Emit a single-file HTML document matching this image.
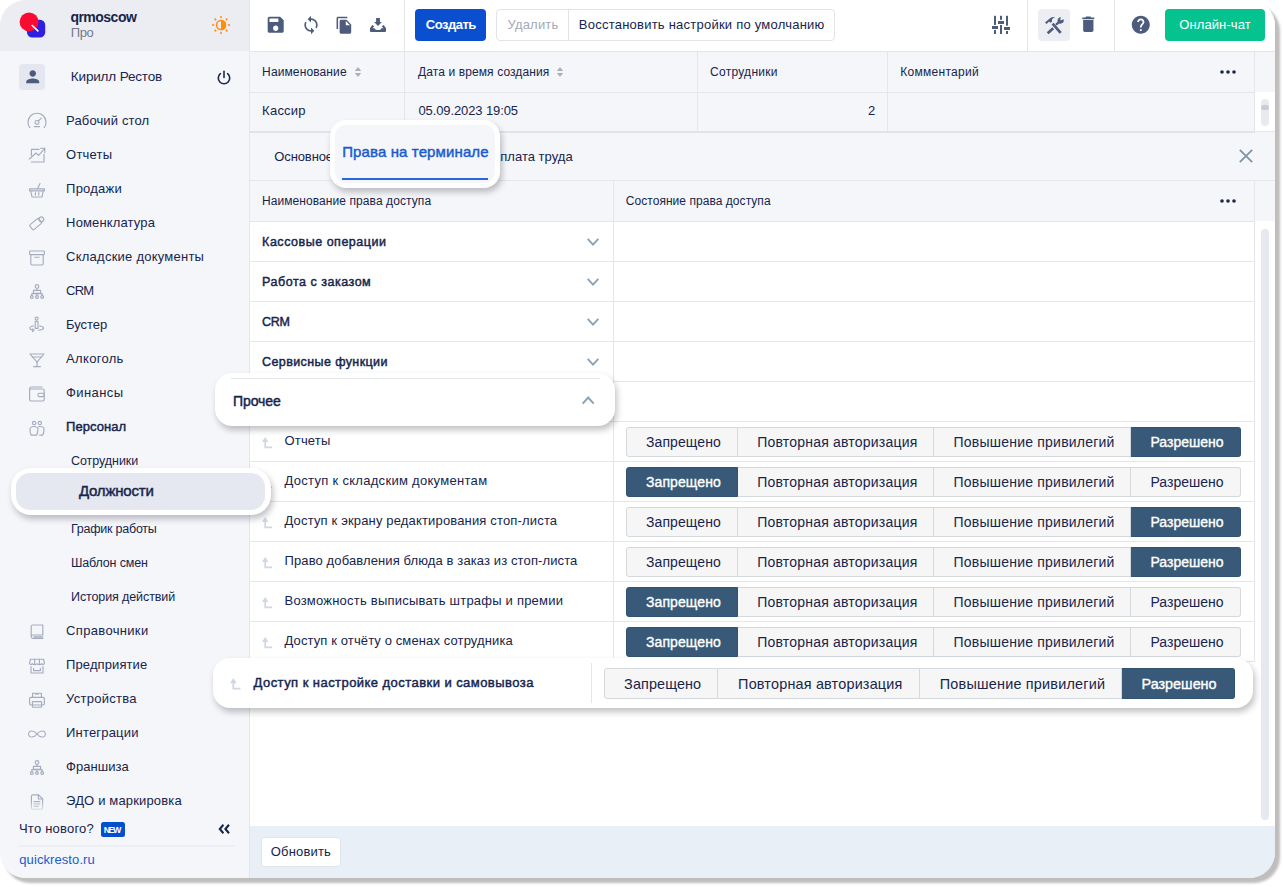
<!DOCTYPE html>
<html lang="ru">
<head>
<meta charset="utf-8">
<title>Должности — Quick Resto</title>
<style>
html,body{margin:0;padding:0;background:#fff;}
body{width:1284px;height:887px;position:relative;overflow:hidden;font-family:"Liberation Sans",Arial,sans-serif;color:#16254c;}
#app{position:absolute;left:0;top:0;width:1275px;height:878px;border-radius:26px 26px 26px 26px;box-shadow:4.2px 5px 2.5px rgba(25,20,15,.275);background:#fff;}
#clip{position:absolute;left:0;top:0;width:1275px;height:878px;border-radius:26px;overflow:hidden;}
.a{position:absolute;}
.t{position:absolute;white-space:nowrap;line-height:20px;height:20px;z-index:10;}
.t.top{z-index:40;}
.t.on{-webkit-text-stroke:0.35px #fff;}
.pop{position:absolute;background:#fff;z-index:30;box-shadow:2px 4px 6px rgba(20,20,30,.26);}
.hl{position:absolute;background:#f0f1f3;}
.vl{position:absolute;width:1px;background:#e4e6ea;}
svg{position:absolute;overflow:visible;}
.seg{position:absolute;height:30px;box-sizing:border-box;border:1px solid #d4d9de;background:#f6f6f6;border-left:none;}
.seg.f{border-left:1px solid #d4d9de;border-radius:3px 0 0 3px;}
.seg.l{border-radius:0 3px 3px 0;}
.seg.on{background:#385a78;border-color:#2f5370;}
</style>
</head>
<body>
<div id="app"></div>
<div id="clip">
<!-- sidebar -->
<div class="a" style="left:0;top:0;width:250px;height:878px;background:#f5f6fa"></div>
<div class="a" style="left:0;top:0;width:250px;height:51px;background:#ecedf2"></div>
<div class="a" style="left:249px;top:0;width:1px;height:878px;background:#e4e6ea"></div>
<div class="a" style="left:19px;top:64px;width:26px;height:26px;border-radius:4px;background:#e4e7ef"></div>
<div class="a" style="left:19px;top:845px;width:216px;height:2px;background:#eceef3"></div>
<div class="a" style="left:101px;top:822px;width:24px;height:15px;border-radius:2.5px;background:#0450cc"></div>
<!-- main -->
<div class="a" style="left:250px;top:0;width:1025px;height:51px;background:#fff"></div>
<div class="a" style="left:250px;top:51px;width:1025px;height:1px;background:#e3e5e9"></div>
<div class="vl" style="left:404px;top:0;height:51px"></div>
<div class="vl" style="left:1027px;top:0;height:51px"></div>
<div class="vl" style="left:1114px;top:0;height:51px"></div>
<div class="a" style="left:415px;top:9px;width:71px;height:32px;border-radius:4px;background:#0a4fd0"></div>
<div class="a" style="left:496px;top:9px;width:338.5px;height:32px;border-radius:4px;border:1px solid #e1e4e8;box-sizing:border-box;background:#fff"></div>
<div class="vl" style="left:568px;top:9px;height:32px;background:#e1e4e8"></div>
<div class="a" style="left:1038px;top:9px;width:32px;height:32px;border-radius:4px;background:#eceef4"></div>
<div class="a" style="left:1165px;top:9px;width:100px;height:32px;border-radius:4px;background:#05c38f"></div>
<!-- table1 -->
<div class="a" style="left:250px;top:52px;width:1025px;height:129px;background:#f5f6fa"></div>
<div class="a" style="left:250px;top:92px;width:1005px;height:1px;background:#e4e6ea"></div>
<div class="a" style="left:250px;top:131px;width:1025px;height:1px;background:#e4e6ea"></div><div class="a" style="left:250px;top:131px;width:1005px;height:2px;background:#e1e3e7"></div>
<div class="vl" style="left:404px;top:52px;height:79px"></div>
<div class="vl" style="left:697px;top:52px;height:79px"></div>
<div class="vl" style="left:887px;top:52px;height:79px"></div>
<div class="vl" style="left:1254px;top:52px;height:79px"></div>
<div class="a" style="left:1255px;top:92px;width:20px;height:39px;background:#fff"></div>
<div class="a" style="left:1261px;top:99px;width:8px;height:27px;border-radius:4px;background:#e8eaef"></div>
<div class="a" style="left:1261px;top:105px;width:8px;height:5px;border-radius:2.5px;background:#c9cdd5"></div>
<!-- tabs bar bottom line -->
<div class="a" style="left:250px;top:180px;width:1025px;height:1px;background:#e4e6ea"></div>
<!-- table2 header -->
<div class="a" style="left:250px;top:222px;width:1025px;height:604px;background:#fff"></div>
<div class="a" style="left:250px;top:181px;width:1025px;height:40px;background:#f5f6fa"></div>
<div class="a" style="left:250px;top:221px;width:1005px;height:1px;background:#e4e6ea"></div>
<div class="vl" style="left:613px;top:181px;height:480px"></div>
<div class="vl" style="left:1254px;top:181px;height:480px"></div>
<div class="a" style="left:250px;top:261px;width:1005px;height:1px;background:#e4e6ea"></div>
<div class="a" style="left:250px;top:301px;width:1005px;height:1px;background:#e4e6ea"></div>
<div class="a" style="left:250px;top:341px;width:1005px;height:1px;background:#e4e6ea"></div>
<div class="a" style="left:250px;top:381px;width:1005px;height:1px;background:#e4e6ea"></div>
<div class="a" style="left:250px;top:421px;width:1005px;height:1px;background:#e4e6ea"></div>
<div class="a" style="left:250px;top:461px;width:1005px;height:1px;background:#e4e6ea"></div>
<div class="a" style="left:250px;top:501px;width:1005px;height:1px;background:#e4e6ea"></div>
<div class="a" style="left:250px;top:541px;width:1005px;height:1px;background:#e4e6ea"></div>
<div class="a" style="left:250px;top:581px;width:1005px;height:1px;background:#e4e6ea"></div>
<div class="a" style="left:250px;top:621px;width:1005px;height:1px;background:#e4e6ea"></div>
<div class="a" style="left:250px;top:661px;width:1005px;height:1px;background:#e4e6ea"></div>
<svg style="left:587px;top:238px" width="12" height="8" viewBox="0 0 12 8"><path d="M0.700 0.800 L6 6.600 L11.300 0.800" fill="none" stroke="#8da2b5" stroke-width="1.900"/></svg>
<svg style="left:587px;top:278px" width="12" height="8" viewBox="0 0 12 8"><path d="M0.700 0.800 L6 6.600 L11.300 0.800" fill="none" stroke="#8da2b5" stroke-width="1.900"/></svg>
<svg style="left:587px;top:318px" width="12" height="8" viewBox="0 0 12 8"><path d="M0.700 0.800 L6 6.600 L11.300 0.800" fill="none" stroke="#8da2b5" stroke-width="1.900"/></svg>
<svg style="left:587px;top:358px" width="12" height="8" viewBox="0 0 12 8"><path d="M0.700 0.800 L6 6.600 L11.300 0.800" fill="none" stroke="#8da2b5" stroke-width="1.900"/></svg>
<div class="seg f" style="left:626px;top:427px;width:112px;height:30px;"></div>
<div class="seg" style="left:738px;top:427px;width:196px;height:30px;"></div>
<div class="seg" style="left:934px;top:427px;width:197px;height:30px;"></div>
<div class="seg l on" style="left:1131px;top:427px;width:110px;height:30px;"></div>
<svg style="left:262px;top:436.8px" width="10" height="11.200" viewBox="0 0 10 11.200"><path d="M0 5 L3.200 0 L6.400 5 Z" fill="#cfd7e3" stroke="none"/><path d="M3.200 4 V10.300 H10" fill="none" stroke="#cfd7e3" stroke-width="1.700"/></svg>
<div class="seg f on" style="left:626px;top:467px;width:112px;height:30px;"></div>
<div class="seg" style="left:738px;top:467px;width:196px;height:30px;"></div>
<div class="seg" style="left:934px;top:467px;width:197px;height:30px;"></div>
<div class="seg l" style="left:1131px;top:467px;width:110px;height:30px;"></div>
<svg style="left:262px;top:476.8px" width="10" height="11.200" viewBox="0 0 10 11.200"><path d="M0 5 L3.200 0 L6.400 5 Z" fill="#cfd7e3" stroke="none"/><path d="M3.200 4 V10.300 H10" fill="none" stroke="#cfd7e3" stroke-width="1.700"/></svg>
<div class="seg f" style="left:626px;top:507px;width:112px;height:30px;"></div>
<div class="seg" style="left:738px;top:507px;width:196px;height:30px;"></div>
<div class="seg" style="left:934px;top:507px;width:197px;height:30px;"></div>
<div class="seg l on" style="left:1131px;top:507px;width:110px;height:30px;"></div>
<svg style="left:262px;top:516.8px" width="10" height="11.200" viewBox="0 0 10 11.200"><path d="M0 5 L3.200 0 L6.400 5 Z" fill="#cfd7e3" stroke="none"/><path d="M3.200 4 V10.300 H10" fill="none" stroke="#cfd7e3" stroke-width="1.700"/></svg>
<div class="seg f" style="left:626px;top:547px;width:112px;height:30px;"></div>
<div class="seg" style="left:738px;top:547px;width:196px;height:30px;"></div>
<div class="seg" style="left:934px;top:547px;width:197px;height:30px;"></div>
<div class="seg l on" style="left:1131px;top:547px;width:110px;height:30px;"></div>
<svg style="left:262px;top:556.8px" width="10" height="11.200" viewBox="0 0 10 11.200"><path d="M0 5 L3.200 0 L6.400 5 Z" fill="#cfd7e3" stroke="none"/><path d="M3.200 4 V10.300 H10" fill="none" stroke="#cfd7e3" stroke-width="1.700"/></svg>
<div class="seg f on" style="left:626px;top:587px;width:112px;height:30px;"></div>
<div class="seg" style="left:738px;top:587px;width:196px;height:30px;"></div>
<div class="seg" style="left:934px;top:587px;width:197px;height:30px;"></div>
<div class="seg l" style="left:1131px;top:587px;width:110px;height:30px;"></div>
<svg style="left:262px;top:596.8px" width="10" height="11.200" viewBox="0 0 10 11.200"><path d="M0 5 L3.200 0 L6.400 5 Z" fill="#cfd7e3" stroke="none"/><path d="M3.200 4 V10.300 H10" fill="none" stroke="#cfd7e3" stroke-width="1.700"/></svg>
<div class="seg f on" style="left:626px;top:627px;width:112px;height:30px;"></div>
<div class="seg" style="left:738px;top:627px;width:196px;height:30px;"></div>
<div class="seg" style="left:934px;top:627px;width:197px;height:30px;"></div>
<div class="seg l" style="left:1131px;top:627px;width:110px;height:30px;"></div>
<svg style="left:262px;top:636.8px" width="10" height="11.200" viewBox="0 0 10 11.200"><path d="M0 5 L3.200 0 L6.400 5 Z" fill="#cfd7e3" stroke="none"/><path d="M3.200 4 V10.300 H10" fill="none" stroke="#cfd7e3" stroke-width="1.700"/></svg>
<div class="a" style="left:1261px;top:229px;width:8px;height:591px;border-radius:4px;background:#e6e9ef"></div>
<!-- footer -->
<div class="a" style="left:250px;top:826px;width:1025px;height:52px;background:#e8eff6"></div>
<div class="a" style="left:260.500px;top:837px;width:80px;height:30px;border-radius:3px;background:#fff;border:1px solid #e0e4ea;box-sizing:border-box"></div>
<svg style="left:17px;top:8px" width="32" height="34" viewBox="17 8 32 34"><rect x="27" y="19.8" width="18.2" height="17.6" rx="5.2" fill="#2f1fe0"/><circle cx="29.1" cy="21.9" r="9.5" fill="#fb0a33"/><path d="M31.7 25 L38.4 31.4" stroke="#fff" stroke-width="1.6" stroke-linecap="butt"/></svg>
<svg style="left:211px;top:15px" width="20" height="20" viewBox="-10 -10 20 20"><g fill="#ff8c0a"><rect x="-0.75" y="-9" width="1.5" height="2.2" transform="rotate(0)"/><rect x="-0.75" y="-9" width="1.5" height="2.2" transform="rotate(45)"/><rect x="-0.75" y="-9" width="1.5" height="2.2" transform="rotate(90)"/><rect x="-0.75" y="-9" width="1.5" height="2.2" transform="rotate(135)"/><rect x="-0.75" y="-9" width="1.5" height="2.2" transform="rotate(180)"/><rect x="-0.75" y="-9" width="1.5" height="2.2" transform="rotate(225)"/><rect x="-0.75" y="-9" width="1.5" height="2.2" transform="rotate(270)"/><rect x="-0.75" y="-9" width="1.5" height="2.2" transform="rotate(315)"/><path d="M0 -5.2 A5.2 5.2 0 0 1 0 5.2 Z"/></g><circle r="4.5" fill="none" stroke="#ff8c0a" stroke-width="1.4"/></svg>
<svg style="left:22.6px;top:67.0px;" width="19.5" height="19.5" viewBox="0 0 24 24"><path fill="#4d5b7c" d="M12 12c2.21 0 4-1.79 4-4s-1.79-4-4-4-4 1.79-4 4 1.79 4 4 4zm0 2c-2.67 0-8 1.34-8 4v2h16v-2c0-2.66-5.33-4-8-4z"/></svg>
<svg style="left:213.5px;top:67.5px" width="20" height="20" viewBox="-10 -10 20 20"><g fill="none" stroke="#1c2a4a" stroke-width="1.6" stroke-linecap="round"><path d="M-3.6 -4.3 A5.7 5.7 0 1 0 3.6 -4.3"/><path d="M0 -6.6 V-0.6"/></g></svg>
<svg style="left:27px;top:113px" width="20" height="20" viewBox="-10 -10 20 20"><g fill="none" stroke="#a5acbe" stroke-width="1.15" stroke-linecap="round" stroke-linejoin="round"><path d="M-7.2 4.6 A9 9 0 1 1 7.2 4.6" /><circle cx="0" cy="-0.6" r="1.9"/><path d="M1.4 -2 L4.2 -4.8"/><path d="M-2.6 3.6 H2.6"/></g></svg>
<svg style="left:27px;top:145px" width="20" height="20" viewBox="-10 -10 20 20"><g fill="none" stroke="#a5acbe" stroke-width="1.15" stroke-linecap="round" stroke-linejoin="round"><path d="M-5.6 -5.6 H2 M-5.6 -5.6 V0.5 M7 -1 V7 H-5.6"/><path d="M-7.6 4 L-1 -2 L1.6 0.4 L7.6 -6.4 M3.6 -6.8 H7.8 V-2.6"/></g></svg>
<svg style="left:27px;top:179.5px" width="20" height="20" viewBox="-10 -10 20 20"><g fill="none" stroke="#a5acbe" stroke-width="1.15" stroke-linecap="round" stroke-linejoin="round"><path d="M-7.4 -1.2 H7.4 V0.8 H-7.4 Z"/><path d="M-6.2 1 L-5 7 H5 L6.2 1"/><path d="M-1.6 2.6 V5 M1.8 2.6 V5"/><path d="M0.6 -1.4 L3 -6.6"/></g></svg>
<svg style="left:27px;top:213px" width="20" height="20" viewBox="-10 -10 20 20"><g fill="none" stroke="#a5acbe" stroke-width="1.15" stroke-linecap="round" stroke-linejoin="round"><g transform="rotate(-40)"><rect x="-7.5" y="-3.1" width="11.5" height="6.2" rx="1.2"/><circle cx="5.6" cy="0" r="2.4"/></g></g></svg>
<svg style="left:27px;top:247.5px" width="20" height="20" viewBox="-10 -10 20 20"><g fill="none" stroke="#a5acbe" stroke-width="1.15" stroke-linecap="round" stroke-linejoin="round"><rect x="-7.4" y="-7" width="14.8" height="3.6" rx="0.8"/><path d="M-6.2 -3.2 V5.8 Q-6.2 7 -5 7 H5 Q6.2 7 6.2 5.8 V-3.2"/><path d="M-2.2 -0.8 H2.2"/></g></svg>
<svg style="left:27px;top:281.5px" width="20" height="20" viewBox="-10 -10 20 20"><g fill="none" stroke="#a5acbe" stroke-width="1.15" stroke-linecap="round" stroke-linejoin="round"><circle cx="0" cy="-5.6" r="1.8"/><path d="M0 -3.8 V-1.6 M-3.6 -1.6 H3.6 V1.4 H-3.6 Z" /><path d="M-5.2 3.6 V1.6 M0 3.6 V1.4 M5.2 3.6 V1.6 M-5.2 1.6 H5.2" /><circle cx="-5.2" cy="5" r="1.4"/><circle cx="0" cy="5" r="1.4"/><circle cx="5.2" cy="5" r="1.4"/></g></svg>
<svg style="left:27px;top:315px" width="20" height="20" viewBox="-10 -10 20 20"><g fill="none" stroke="#a5acbe" stroke-width="1.15" stroke-linecap="round" stroke-linejoin="round"><circle cx="-0.4" cy="-6.4" r="1.5"/><path d="M-1.8 -3.6 H1 V3.4 H-1.8 Z"/><path d="M2.6 1 C8 1.4 8 5 1.6 5.2 M-3.4 1 C-8.6 1.6 -8 5 -3.4 5.2 M-4.6 4 L-3 5.3 L-4.6 6.6"/></g></svg>
<svg style="left:27px;top:349.5px" width="20" height="20" viewBox="-10 -10 20 20"><g fill="none" stroke="#a5acbe" stroke-width="1.15" stroke-linecap="round" stroke-linejoin="round"><path d="M-7 -6 H7 L0 2.2 Z"/><path d="M-4.6 -3 H4.6"/><path d="M0 2.2 V6.4 M-3.4 6.6 H3.4"/></g></svg>
<svg style="left:27px;top:383.5px" width="20" height="20" viewBox="-10 -10 20 20"><g fill="none" stroke="#a5acbe" stroke-width="1.15" stroke-linecap="round" stroke-linejoin="round"><path d="M-7.4 -5 Q-7.4 -7 -5.4 -7 H5 M-7.4 -5 H5.8 Q7.2 -5 7.2 -3.6 V5.6 Q7.2 7 5.8 7 H-6 Q-7.4 7 -7.4 5.6 Z"/><rect x="1" y="-0.8" width="6.2" height="3.4" rx="1.2"/></g></svg>
<svg style="left:27px;top:417.5px" width="20" height="20" viewBox="-10 -10 20 20"><g fill="none" stroke="#a5acbe" stroke-width="1.15" stroke-linecap="round" stroke-linejoin="round"><circle cx="-2.900" cy="-5" r="1.700"/><circle cx="2.800" cy="-5" r="1.700"/><path d="M-7 1.500 Q-7 -1.500 -3.100 -1.500 Q0.900 -1.500 0.900 1.500 Q0.900 5 -0.400 7.100 H-5.800 Q-7 5 -7 1.500 Z"/><path d="M1.600 -1.200 Q2.200 -1.500 3 -1.500 Q7 -1.500 7 1.500 Q7 5 5.700 7.100 H2.600"/></g></svg>
<svg style="left:27px;top:621.5px" width="20" height="20" viewBox="-10 -10 20 20"><g fill="none" stroke="#a5acbe" stroke-width="1.15" stroke-linecap="round" stroke-linejoin="round"><path d="M-5.8 4.4 V-5.2 Q-5.8 -7 -4 -7 H5.8 V3 H-4.2 Q-5.8 3 -5.8 4.6 Q-5.8 6.4 -4.2 6.4 H5.8 M-3 4.8 H5.8"/></g></svg>
<svg style="left:27px;top:655.5px" width="20" height="20" viewBox="-10 -10 20 20"><g fill="none" stroke="#a5acbe" stroke-width="1.15" stroke-linecap="round" stroke-linejoin="round"><path d="M-6.6 -6.8 H6.6 L7.4 -2.6 Q6.2 -0.4 4.6 -2.4 Q2.4 -0.2 0 -2.4 Q-2.4 -0.2 -4.6 -2.4 Q-6.2 -0.4 -7.4 -2.6 Z"/><path d="M-2.4 -6.6 V-2.6 M2.4 -6.6 V-2.6"/><path d="M-6 0.6 V7 H6 V0.6 M-3.4 2.2 V4.6 H3.4 V2.2"/></g></svg>
<svg style="left:27px;top:689.5px" width="20" height="20" viewBox="-10 -10 20 20"><g fill="none" stroke="#a5acbe" stroke-width="1.15" stroke-linecap="round" stroke-linejoin="round"><path d="M-4.4 -2.6 V-6.8 H-2 L-1 -5.6 L0 -6.8 L1 -5.6 L2 -6.8 H4.4 V-2.6"/><rect x="-7.4" y="-2.6" width="14.8" height="7.6" rx="1.4"/><rect x="-4.6" y="1.6" width="9.2" height="5.6" rx="0.6"/></g></svg>
<svg style="left:27px;top:723.5px" width="20" height="20" viewBox="-10 -10 20 20"><g fill="none" stroke="#a5acbe" stroke-width="1.15" stroke-linecap="round" stroke-linejoin="round"><path d="M0 0 C-2.6 -3.6 -8.4 -4.4 -8.4 0 C-8.4 4.4 -2.6 3.6 0 0 C2.6 -3.6 8.4 -4.4 8.4 0 C8.4 4.4 2.6 3.6 0 0 Z"/></g></svg>
<svg style="left:27px;top:757.5px" width="20" height="20" viewBox="-10 -10 20 20"><g fill="none" stroke="#a5acbe" stroke-width="1.15" stroke-linecap="round" stroke-linejoin="round"><circle cx="0" cy="-5.6" r="1.8"/><path d="M0 -3.8 V-1.6 M-3.6 -1.6 H3.6 V1.4 H-3.6 Z" /><path d="M-5.2 3.6 V1.6 M0 3.6 V1.4 M5.2 3.6 V1.6 M-5.2 1.6 H5.2" /><circle cx="-5.2" cy="5" r="1.4"/><circle cx="0" cy="5" r="1.4"/><circle cx="5.2" cy="5" r="1.4"/></g></svg>
<svg style="left:27px;top:791.5px" width="20" height="20" viewBox="-10 -10 20 20"><g fill="none" stroke="#a5acbe" stroke-width="1.15" stroke-linecap="round" stroke-linejoin="round"><path d="M-5.6 -5.6 Q-5.6 -7.2 -4 -7.2 H1.6 L5.6 -3.2 V5.6 Q5.6 7.2 4 7.2 H-4 Q-5.6 7.2 -5.6 5.6 Z"/><path d="M1.4 -7 V-3 H5.4"/><path d="M-3 -0.4 H3 M-3 2 H3 M-3 4.4 H1.4"/></g></svg>
<svg style="left:265.3px;top:14.3px;" width="21.4" height="21.4" viewBox="0 0 24 24"><path fill="#4d5b7c" d="M17 3H5c-1.11 0-2 .9-2 2v14c0 1.1.89 2 2 2h14c1.1 0 2-.9 2-2V7l-4-4zm-5 16c-1.66 0-3-1.34-3-3s1.34-3 3-3 3 1.34 3 3-1.34 3-3 3zm3-10H5V5h10v4z"/></svg>
<svg style="left:300.5px;top:15.0px;" width="20" height="20" viewBox="0 0 24 24"><path fill="#4d5b7c" d="M12 4V1L8 5l4 4V6c3.31 0 6 2.69 6 6 0 1.01-.25 1.97-.7 2.8l1.46 1.46A7.93 7.93 0 0020 12c0-4.42-3.58-8-8-8zm0 14c-3.31 0-6-2.69-6-6 0-1.01.25-1.97.7-2.8L5.24 7.74A7.93 7.93 0 004 12c0 4.42 3.58 8 8 8v3l4-4-4-4v3z"/></svg>
<svg style="left:335.2px;top:15.8px;" width="18.5" height="18.5" viewBox="0 0 24 24"><path fill="#4d5b7c" d="M16 1H4c-1.1 0-2 .9-2 2v14h2V3h12V1zm-1 4l6 6v10c0 1.1-.9 2-2 2H7.99C6.89 23 6 22.1 6 21l.01-14c0-1.1.89-2 1.99-2h7zm-1 7h5.500L14 6.500V12z"/></svg>
<svg style="left:366px;top:13px" width="24" height="24" viewBox="366 13 24 24"><path fill="#4d5b7c" d="M376.100 17.900 H379.900 V22 H381.900 L378 26 L374.100 22 H376.100 Z M372.300 25 L374.200 26.200 L372.600 28.300 H374.600 Q375.200 29.900 376.600 29.900 H379.400 Q380.800 29.900 381.400 28.300 H383.400 L381.800 26.200 L383.700 25 L386 28.300 V31 Q386 31.900 385.100 31.900 H370.900 Q370 31.900 370 31 V28.300 Z"/></svg>
<svg style="left:989px;top:13px" width="24" height="24" viewBox="0 0 24 24"><g fill="#4d5b7c"><rect x="5" y="2.800" width="2" height="9.100"/><rect x="3" y="13" width="6" height="3"/><rect x="5" y="17" width="2" height="4"/><rect x="11" y="2.800" width="2" height="4"/><rect x="9" y="8" width="6" height="3"/><rect x="11" y="12" width="2" height="9"/><rect x="17" y="2.800" width="2" height="9.900"/><rect x="15" y="14" width="6" height="3"/><rect x="17" y="18" width="2" height="3"/></g></svg>
<svg style="left:1042px;top:13px" width="24" height="24" viewBox="0 0 24 24"><g fill="#4d5b7c"><path d="M3 9.400 L8.400 5 Q10.600 3.600 13 4.200 Q10.600 5 10 6.600 L9.900 9 L8.300 9.800 L7 8.600 L4.700 11 Z"/><path d="M18.700 3.900 L18.300 7.400 L21.700 6.300 Q22.300 9 20.200 10.100 Q18.600 11 17 10.400 L14.800 12.600 L13.200 11 L15.600 8.700 Q15.200 6.700 16.400 5.300 Q17.300 4.200 18.700 3.900 Z"/></g><g stroke="#4d5b7c" stroke-width="2.700" fill="none"><path d="M10.600 10.600 L18.700 19.800"/><path d="M11.200 15.200 L5.700 20.300"/></g></svg>
<svg style="left:1077.5px;top:14.2px;" width="20.6" height="20.6" viewBox="0 0 24 24"><path fill="#4d5b7c" d="M6 19c0 1.100.9 2 2 2h8c1.100 0 2-.9 2-2V7H6v12zM19 4h-3.500l-1-1h-5l-1 1H5v2h14V4z"/></svg>
<svg style="left:1130.2px;top:14.2px;" width="21.6" height="21.6" viewBox="0 0 24 24"><path fill="#4d5b7c" d="M12 2C6.480 2 2 6.480 2 12s4.480 10 10 10 10-4.480 10-10S17.520 2 12 2zm1 17h-2v-2h2v2zm2.070-7.750l-.9.920C13.450 12.900 13 13.500 13 15h-2v-.5c0-1.100.45-2.100 1.170-2.830l1.240-1.260c.37-.36.590-.86.590-1.410 0-1.100-.9-2-2-2s-2 .9-2 2H8c0-2.210 1.790-4 4-4s4 1.790 4 4c0 .88-.36 1.680-.93 2.250z"/></svg>
<svg style="left:353.6px;top:66px" width="8" height="12" viewBox="0 0 8 12"><path fill="#a9afbb" d="M4 1 L7.200 4.900 H0.800 Z M4 11 L0.800 7.100 H7.200 Z"/></svg>
<svg style="left:555.8px;top:66px" width="8" height="12" viewBox="0 0 8 12"><path fill="#a9afbb" d="M4 1 L7.200 4.900 H0.800 Z M4 11 L0.800 7.100 H7.200 Z"/></svg>
<svg style="left:1219px;top:69px" width="18" height="6" viewBox="0 0 18 6"><g fill="#1c2744"><circle cx="3" cy="3" r="1.800"/><circle cx="9" cy="3" r="1.800"/><circle cx="15" cy="3" r="1.800"/></g></svg>
<svg style="left:1219px;top:198px" width="18" height="6" viewBox="0 0 18 6"><g fill="#1c2744"><circle cx="3" cy="3" r="1.800"/><circle cx="9" cy="3" r="1.800"/><circle cx="15" cy="3" r="1.800"/></g></svg>
<svg style="left:217px;top:822px" width="14" height="14" viewBox="217 822 14 14"><path d="M223.400 824.800 L219.800 829 L223.400 833.200 M229 824.800 L225.400 829 L229 833.200" fill="none" stroke="#16254c" stroke-width="2.100"/></svg>
<svg style="left:1239px;top:149px" width="14" height="14" viewBox="0 0 14 14"><path d="M0.800 0.800 L13.200 13.200 M13.200 0.800 L0.800 13.200" stroke="#7f96a8" stroke-width="1.900" fill="none"/></svg>
<div class="a" style="left:0;top:800px;width:249px;height:14px;background:linear-gradient(to bottom,rgba(245,246,250,0),rgba(245,246,250,.95))"></div>
</div>
<!-- highlights -->
<div class="pop" style="left:11px;top:468px;width:260px;height:47px;border-radius:20px;"></div>
<div class="a" style="left:16px;top:473px;width:249px;height:37px;border-radius:14px;background:#e5e8f0;z-index:31"></div>
<div class="pop" style="left:330px;top:120px;width:170px;height:68px;border-radius:16px;"></div>
<div class="a" style="left:335px;top:125px;width:160px;height:58px;border-radius:11px;background:#f5f6fa;z-index:31"></div>
<div class="a" style="left:342px;top:177.5px;width:146px;height:2.5px;background:#2a66d5;z-index:32"></div>
<div class="pop" style="left:215px;top:373px;width:400px;height:53px;border-radius:17px;"></div>
<div class="a" style="left:231px;top:378px;width:369px;height:1px;background:#e4e6ea;z-index:31"></div>
<svg style="left:582.4px;top:396.4px;z-index:31" width="12.4" height="8.4" viewBox="0 0 12.4 8.4"><path d="M0.7 7.6 L6.2 1.5 L11.7 7.6" fill="none" stroke="#8da2b5" stroke-width="2"/></svg>
<div class="pop" style="left:213px;top:658px;width:1040px;height:50px;border-radius:17px;"></div>
<div class="a" style="left:591px;top:663px;width:1px;height:40px;background:#e4e6ea;z-index:31"></div>
<svg style="left:230.4px;top:678px;z-index:31" width="10.400" height="11.700" viewBox="0 0 10 11.200"><path d="M0 5 L3.200 0 L6.400 5 Z" fill="#cfd7e3" stroke="none"/><path d="M3.200 4 V10.300 H10" fill="none" stroke="#cfd7e3" stroke-width="1.700"/></svg>
<div class="seg f" style="left:604.2px;top:668px;width:114.09999999999991px;height:30.6px;z-index:31;"></div>
<div class="seg" style="left:718.3px;top:668px;width:201.30000000000007px;height:30.6px;z-index:31;"></div>
<div class="seg" style="left:919.6px;top:668px;width:202.69999999999993px;height:30.6px;z-index:31;"></div>
<div class="seg l on" style="left:1122.3px;top:668px;width:112.40000000000009px;height:30.6px;z-index:31;"></div>
<span class="t" style="left:70.40px;top:7.25px;font-size:14px;font-weight:700;letter-spacing:-0.514px;">qrmoscow</span>
<span class="t" style="left:70.80px;top:23.15px;font-size:13px;color:#717a8c;letter-spacing:-0.450px;">Про</span>
<span class="t" style="left:70.80px;top:66.95px;font-size:13.5px;letter-spacing:-0.158px;">Кирилл Рестов</span>
<span class="t" style="left:66.10px;top:110.85px;font-size:13px;letter-spacing:0.127px;">Рабочий стол</span>
<span class="t" style="left:66.10px;top:144.95px;font-size:13px;letter-spacing:0.200px;">Отчеты</span>
<span class="t" style="left:66.10px;top:178.75px;font-size:13px;letter-spacing:0.217px;">Продажи</span>
<span class="t" style="left:66.10px;top:212.75px;font-size:13px;letter-spacing:0.145px;">Номенклатура</span>
<span class="t" style="left:66.10px;top:246.75px;font-size:13px;letter-spacing:0.239px;">Складские документы</span>
<span class="t" style="left:66.10px;top:280.75px;font-size:13px;letter-spacing:-0.850px;">CRM</span>
<span class="t" style="left:66.10px;top:314.75px;font-size:13px;letter-spacing:-0.060px;">Бустер</span>
<span class="t" style="left:66.10px;top:348.75px;font-size:13px;letter-spacing:0.314px;">Алкоголь</span>
<span class="t" style="left:66.10px;top:382.75px;font-size:13px;letter-spacing:0.383px;">Финансы</span>
<span class="t" style="left:66.10px;top:416.75px;font-size:13px;-webkit-text-stroke:0.45px;letter-spacing:0.029px;">Персонал</span>
<span class="t" style="left:71.00px;top:451.15px;font-size:12.5px;letter-spacing:-0.056px;">Сотрудники</span>
<span class="t" style="left:71.00px;top:519.15px;font-size:12.5px;letter-spacing:-0.233px;">График работы</span>
<span class="t" style="left:71.00px;top:552.95px;font-size:12.5px;letter-spacing:-0.160px;">Шаблон смен</span>
<span class="t" style="left:71.00px;top:586.85px;font-size:12.5px;letter-spacing:-0.107px;">История действий</span>
<span class="t top" style="left:78.90px;top:481.15px;font-size:15px;-webkit-text-stroke:0.45px;letter-spacing:-0.187px;">Должности</span>
<span class="t" style="left:66.10px;top:620.95px;font-size:13px;letter-spacing:0.330px;">Справочники</span>
<span class="t" style="left:66.10px;top:654.85px;font-size:13px;letter-spacing:0.100px;">Предприятие</span>
<span class="t" style="left:66.10px;top:688.65px;font-size:13px;letter-spacing:0.256px;">Устройства</span>
<span class="t" style="left:66.10px;top:722.65px;font-size:13px;letter-spacing:0.178px;">Интеграции</span>
<span class="t" style="left:66.10px;top:756.65px;font-size:13px;letter-spacing:0.029px;">Франшиза</span>
<span class="t" style="left:66.10px;top:790.75px;font-size:13px;letter-spacing:0.153px;">ЭДО и маркировка</span>
<span class="t" style="left:19.00px;top:818.75px;font-size:13px;letter-spacing:0.210px;">Что нового?</span>
<span class="t" style="left:103.80px;top:820.15px;font-size:8.8px;font-weight:700;color:#ffffff;letter-spacing:-1.550px;">NEW</span>
<span class="t" style="left:19.30px;top:849.85px;font-size:13px;color:#1a5ad0;letter-spacing:0.083px;">quickresto.ru</span>
<span class="t" style="left:425.80px;top:14.95px;font-size:13px;font-weight:700;color:#ffffff;letter-spacing:-0.483px;">Создать</span>
<span class="t" style="left:507.50px;top:14.95px;font-size:13px;color:#a4aab6;letter-spacing:0.183px;">Удалить</span>
<span class="t" style="left:578.80px;top:14.95px;font-size:13px;letter-spacing:0.232px;">Восстановить настройки по умолчанию</span>
<span class="t" style="left:1179.20px;top:14.75px;font-size:13px;color:#ffffff;letter-spacing:0.111px;">Онлайн-чат</span>
<span class="t" style="left:262.10px;top:62.15px;font-size:12px;letter-spacing:0.118px;">Наименование</span>
<span class="t" style="left:418.10px;top:62.15px;font-size:12px;letter-spacing:0.100px;">Дата и время создания</span>
<span class="t" style="left:710.00px;top:62.15px;font-size:12px;letter-spacing:0.278px;">Сотрудники</span>
<span class="t" style="left:900.20px;top:62.15px;font-size:12px;letter-spacing:0.290px;">Комментарий</span>
<span class="t" style="left:262.10px;top:100.85px;font-size:13px;letter-spacing:0.240px;">Кассир</span>
<span class="t" style="left:418.40px;top:100.85px;font-size:13px;letter-spacing:-0.100px;">05.09.2023 19:05</span>
<span class="t" style="left:868.10px;top:100.85px;font-size:13px;">2</span>
<span class="t" style="left:274.30px;top:147.15px;font-size:13px;letter-spacing:-0.114px;">Основное</span>
<span class="t" style="left:490.10px;top:147.15px;font-size:13px;letter-spacing:0.027px;">Оплата труда</span>
<span class="t top" style="left:342.20px;top:142.45px;font-size:15px;-webkit-text-stroke:0.45px;color:#1a5ad0;letter-spacing:0.118px;">Права на терминале</span>
<span class="t" style="left:261.90px;top:191.15px;font-size:12px;letter-spacing:0.084px;">Наименование права доступа</span>
<span class="t" style="left:625.80px;top:191.15px;font-size:12px;letter-spacing:0.045px;">Состояние права доступа</span>
<span class="t" style="left:262.10px;top:231.85px;font-size:12.5px;-webkit-text-stroke:0.45px;letter-spacing:0.519px;">Кассовые операции</span>
<span class="t" style="left:262.10px;top:271.85px;font-size:12.5px;-webkit-text-stroke:0.45px;letter-spacing:0.520px;">Работа с заказом</span>
<span class="t" style="left:262.10px;top:311.85px;font-size:12.5px;-webkit-text-stroke:0.45px;letter-spacing:-0.300px;">CRM</span>
<span class="t" style="left:262.10px;top:351.85px;font-size:12.5px;-webkit-text-stroke:0.45px;letter-spacing:0.394px;">Сервисные функции</span>
<span class="t top" style="left:232.90px;top:390.55px;font-size:14px;-webkit-text-stroke:0.45px;letter-spacing:-0.040px;">Прочее</span>
<span class="t" style="left:284.50px;top:431.15px;font-size:13px;letter-spacing:0.160px;">Отчеты</span>
<span class="t" style="left:646.00px;top:432.45px;font-size:14px;letter-spacing:0.088px;">Запрещено</span>
<span class="t" style="left:757.20px;top:432.45px;font-size:14px;letter-spacing:0.205px;">Повторная авторизация</span>
<span class="t" style="left:953.50px;top:432.45px;font-size:14px;letter-spacing:0.221px;">Повышение привилегий</span>
<span class="t on" style="left:1150.50px;top:432.45px;font-size:14px;color:#ffffff;letter-spacing:-0.012px;">Разрешено</span>
<span class="t" style="left:284.50px;top:471.15px;font-size:13px;letter-spacing:0.296px;">Доступ к складским документам</span>
<span class="t on" style="left:646.00px;top:472.45px;font-size:14px;color:#ffffff;letter-spacing:0.088px;">Запрещено</span>
<span class="t" style="left:757.20px;top:472.45px;font-size:14px;letter-spacing:0.205px;">Повторная авторизация</span>
<span class="t" style="left:953.50px;top:472.45px;font-size:14px;letter-spacing:0.221px;">Повышение привилегий</span>
<span class="t" style="left:1150.50px;top:472.45px;font-size:14px;letter-spacing:-0.012px;">Разрешено</span>
<span class="t" style="left:284.50px;top:511.15px;font-size:13px;letter-spacing:0.160px;">Доступ к экрану редактирования стоп-листа</span>
<span class="t" style="left:646.00px;top:512.45px;font-size:14px;letter-spacing:0.088px;">Запрещено</span>
<span class="t" style="left:757.20px;top:512.45px;font-size:14px;letter-spacing:0.205px;">Повторная авторизация</span>
<span class="t" style="left:953.50px;top:512.45px;font-size:14px;letter-spacing:0.221px;">Повышение привилегий</span>
<span class="t on" style="left:1150.50px;top:512.45px;font-size:14px;color:#ffffff;letter-spacing:-0.012px;">Разрешено</span>
<span class="t" style="left:284.50px;top:551.15px;font-size:13px;letter-spacing:0.114px;">Право добавления блюда в заказ из стоп-листа</span>
<span class="t" style="left:646.00px;top:552.45px;font-size:14px;letter-spacing:0.088px;">Запрещено</span>
<span class="t" style="left:757.20px;top:552.45px;font-size:14px;letter-spacing:0.205px;">Повторная авторизация</span>
<span class="t" style="left:953.50px;top:552.45px;font-size:14px;letter-spacing:0.221px;">Повышение привилегий</span>
<span class="t on" style="left:1150.50px;top:552.45px;font-size:14px;color:#ffffff;letter-spacing:-0.012px;">Разрешено</span>
<span class="t" style="left:284.50px;top:591.15px;font-size:13px;letter-spacing:0.216px;">Возможность выписывать штрафы и премии</span>
<span class="t on" style="left:646.00px;top:592.45px;font-size:14px;color:#ffffff;letter-spacing:0.088px;">Запрещено</span>
<span class="t" style="left:757.20px;top:592.45px;font-size:14px;letter-spacing:0.205px;">Повторная авторизация</span>
<span class="t" style="left:953.50px;top:592.45px;font-size:14px;letter-spacing:0.221px;">Повышение привилегий</span>
<span class="t" style="left:1150.50px;top:592.45px;font-size:14px;letter-spacing:-0.012px;">Разрешено</span>
<span class="t" style="left:284.50px;top:631.15px;font-size:13px;letter-spacing:0.115px;">Доступ к отчёту о сменах сотрудника</span>
<span class="t on" style="left:646.00px;top:632.45px;font-size:14px;color:#ffffff;letter-spacing:0.088px;">Запрещено</span>
<span class="t" style="left:757.20px;top:632.45px;font-size:14px;letter-spacing:0.205px;">Повторная авторизация</span>
<span class="t" style="left:953.50px;top:632.45px;font-size:14px;letter-spacing:0.221px;">Повышение привилегий</span>
<span class="t" style="left:1150.50px;top:632.45px;font-size:14px;letter-spacing:-0.012px;">Разрешено</span>
<span class="t top" style="left:253.60px;top:672.65px;font-size:13px;-webkit-text-stroke:0.45px;letter-spacing:0.446px;">Доступ к настройке доставки и самовывоза</span>
<span class="t top" style="left:624.10px;top:673.85px;font-size:14.4px;letter-spacing:0.112px;">Запрещено</span>
<span class="t top" style="left:738.10px;top:673.85px;font-size:14.4px;letter-spacing:0.195px;">Повторная авторизация</span>
<span class="t top" style="left:939.80px;top:673.85px;font-size:14.4px;letter-spacing:0.216px;">Повышение привилегий</span>
<span class="t top on" style="left:1141.60px;top:673.85px;font-size:14.4px;color:#ffffff;letter-spacing:-0.012px;">Разрешено</span>
<span class="t" style="left:270.80px;top:841.85px;font-size:13px;letter-spacing:0.171px;">Обновить</span>
</body>
</html>
